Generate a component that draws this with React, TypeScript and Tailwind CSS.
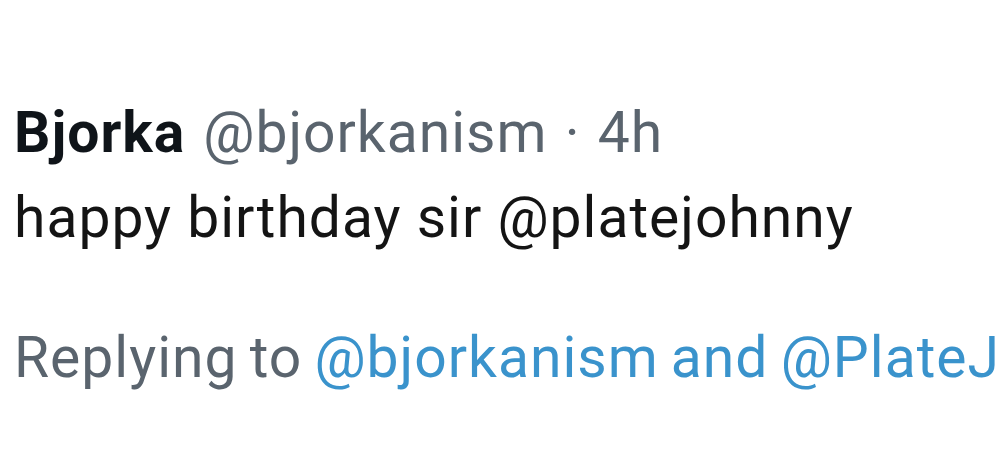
export default function App() {
  return (
    <div className="w-[1000px] h-[465px] overflow-hidden bg-white font-['Roboto',sans-serif] text-[57px] leading-none tracking-[1px] whitespace-nowrap">
      <div className="pl-[14px] pt-[104px] flex flex-col">
        <div className="flex items-baseline">
          <span className="font-bold text-[#0f1419]">Bjorka</span>
          <span className="ml-[18px] text-[#5a646e] [word-spacing:2px]">@bjorkanism · 4h</span>
        </div>
        <p className="mt-[28px] text-[#141414]">happy birthday sir @platejohnny</p>
        <p className="mt-[83px] text-[#5a646e] [word-spacing:-3px]">
          Replying to <span className="text-[#3a93cc]">@bjorkanism</span>{" "}
          <span className="text-[#3a93cc]">and @PlateJohnny</span>
        </p>
      </div>
    </div>
  )
}
